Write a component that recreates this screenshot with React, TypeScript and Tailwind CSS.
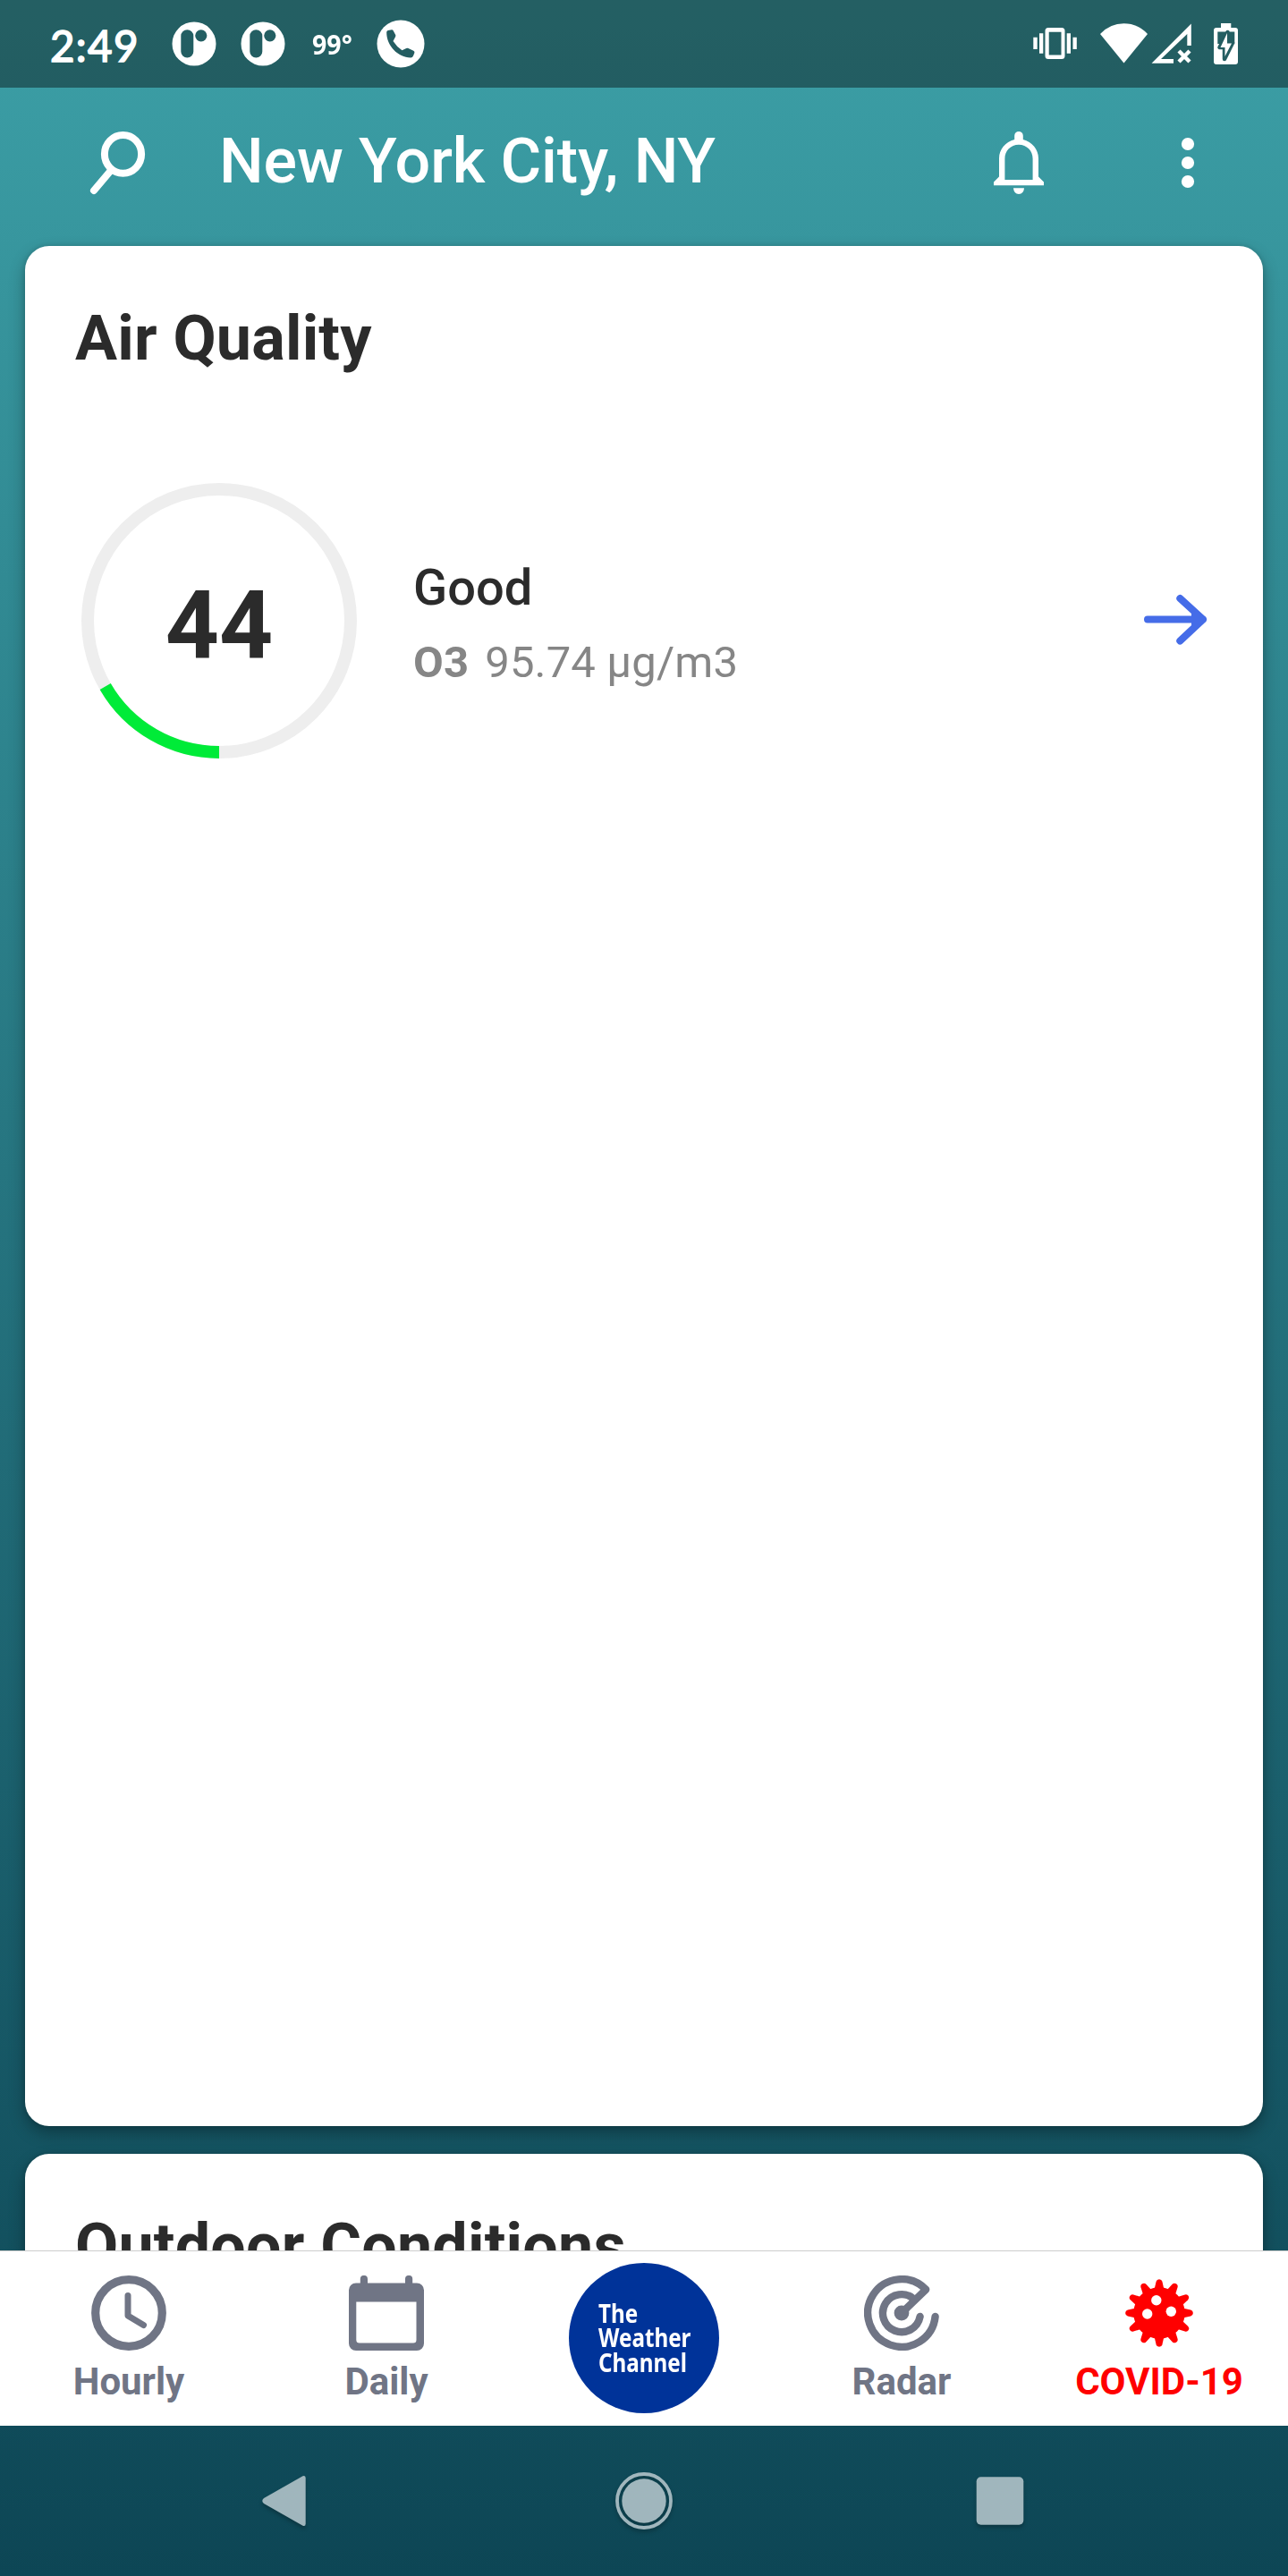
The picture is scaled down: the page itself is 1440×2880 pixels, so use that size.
import type { ReactNode } from "react";

function BadgeIcon() {
  return (
    <svg className="h-[50px] w-[50px]" viewBox="0 0 50 50">
      <path
        fill="#fff"
        fillRule="evenodd"
        d="M25 .5a24.5 24.5 0 1 1 0 49a24.5 24.5 0 1 1 0-49ZM17.3 9.2a7 7 0 0 0-7 7V33.500a7 7 0 0 0 14 0V16.200a7 7 0 0 0-7-7ZM32.800 9.200a6.600 6.600 0 1 0 0 13.200a6.600 6.600 0 1 0 0-13.200Z"
      />
    </svg>
  );
}

function PhoneBadge() {
  return (
    <svg className="ml-[27px] h-[54px] w-[54px]" viewBox="421.500 22.500 54 54">
      <circle cx="448.500" cy="49.500" r="26.500" fill="#fff" />
      <path
        fill="#245d61"
        d="M434.300 34.600L438.500 33.700Q439.600 33.600 440 34.600L442.700 39.500Q443.200 40.600 442.500 41.800L440 46.500Q443.800 52.500 450 56.700L454.800 54.500Q456 53.900 457 54.400L462.800 57.300Q464.300 58.100 463.900 59.500L462.500 63Q461.700 65.200 459.500 65.100C445.500 65 432.500 51.500 432.700 36.600Q432.800 35 434.300 34.600Z"
      />
    </svg>
  );
}

function StatusBar() {
  return (
    <header className="flex h-[98px] shrink-0 items-center justify-between bg-black/40 text-white">
      <div className="flex items-center">
        <span className="ml-[56px] w-[136px] pt-[3px] font-['Lato',sans-serif] text-[47.5px] leading-none font-normal tracking-[1.3px] [-webkit-text-stroke:1.600px_white]">2:49</span>
        <BadgeIcon />
        <span className="w-[27px]" />
        <BadgeIcon />
        <span className="ml-[30px] w-[45px] pt-[1px] font-['Noto_Sans',sans-serif] text-[31px] leading-none font-bold">
          <span className="inline-block origin-left scale-x-[0.920]">99°</span>
        </span>
        <PhoneBadge />
      </div>
      <svg className="mr-[50px] h-[60px] w-[240px]" viewBox="1150 19 240 60">
        <g fill="#fff">
          <path fillRule="evenodd" d="M1172 31H1187Q1190.500 31 1190.500 34.500V62.500Q1190.500 66 1187 66H1172Q1168.500 66 1168.500 62.500V34.500Q1168.500 31 1172 31ZM1172.700 35.700V61.500H1186.500V35.700Z" />
          <path d="M1155.300 41.700h4.400v13.300h-4.400zM1162 37.300h4.300v22.400h-4.300zM1192.700 37.300h4.300v22.400h-4.300zM1199.500 41.700h4.300v13.300h-4.300z" />
          <path d="M1230 38Q1241 26.300 1256.500 26.300T1283 38L1256.500 70.500Z" />
          <path fillRule="evenodd" d="M1331.800 26.500V51H1327.300V38L1298 66H1312V70.700H1287.500Z" />
          <path fillRule="evenodd" d="M1365 26H1376.300V31H1381Q1384 31 1384 34V69Q1384 72 1381 72H1360Q1357 72 1357 69V34Q1357 31 1360 31H1365ZM1361.300 35.500V49H1380.300V35.500Z" />
        </g>
        <path d="M1318 57L1330 69M1330 57L1318 69" stroke="#fff" strokeWidth="4.400" />
        <path d="M1372.500 36L1363.500 53H1369V66L1378 48H1372.500Z" fill="#fff" stroke="#245d61" strokeWidth="4.500" strokeLinejoin="round" />
        <path d="M1372 37L1364.500 53H1369.500V63L1377 48.500H1372Z" fill="#fff" />
      </svg>
    </header>
  );
}

function AppBar() {
  return (
    <div className="flex h-[177px] shrink-0 items-start pt-[38px] text-white">
      <svg className="mt-[6px] ml-[94px] h-[80px] w-[80px]" viewBox="94 142 80 80" fill="none" stroke="#fff">
        <ellipse cx="137.500" cy="172.300" rx="20.600" ry="21.400" strokeWidth="8" />
        <path d="M105 213L124 190.500" strokeWidth="8" strokeLinecap="round" />
      </svg>
      <h1 className="ml-[71px] flex-1 font-['Roboto',sans-serif] text-[70px] leading-[88px] font-medium tracking-[-0.1px]">New York City, NY</h1>
      <svg className="mt-[6px] h-[80px] w-[64px]" viewBox="1107 142 64 80">
        <path
          fill="#fff"
          fillRule="evenodd"
          d="M1134.200 156V151.700a4.800 4.800 0 0 1 9.600 0V156C1154 158.700 1161 167 1161 177V197.500L1167 203.500V207.300H1111V203.500L1117 197.500V177C1117 167 1124 158.700 1134.200 156ZM1139 161.700C1130 161.700 1123.400 168.500 1123.400 177.500V201H1154.600V177.500C1154.600 168.500 1148 161.700 1139 161.700Z"
        />
        <path fill="#fff" d="M1133 210.300H1145Q1144.500 217 1139 217T1133 210.300Z" />
      </svg>
      <svg className="mt-[6px] mr-[88px] ml-[133px] h-[80px] w-[48px]" viewBox="1304 142 48 80" fill="#fff">
        <circle cx="1328" cy="161" r="7.100" />
        <circle cx="1328" cy="182" r="7.100" />
        <circle cx="1328" cy="203" r="7.100" />
      </svg>
    </div>
  );
}

function Card({ title, className, children }: { title: string; className: string; children?: ReactNode }) {
  return (
    <section className={`mx-[28px] shrink-0 rounded-[27px] bg-white px-[56px] pt-[61px] shadow-[0_8px_18px_rgba(0,0,0,0.3),0_0_5px_rgba(0,0,0,0.15)] ${className}`}>
      <h2 className="text-[70px] leading-[84px] font-bold tracking-[0.200px] text-[#2b2b2b]">{title}</h2>
      {children}
    </section>
  );
}

function AirQualityRow() {
  return (
    <div className="mt-[116px] flex items-center">
      <div className="ml-[3px] grid h-[316px] w-[316px] place-items-center">
        <svg className="col-start-1 row-start-1 h-[316px] w-[316px]" viewBox="-158 -158 316 316" fill="none" strokeWidth="14">
          <circle r="147" stroke="#eeeeee" />
          <path d="M0 147A147 147 0 0 1 -127.300 73.500" stroke="#00eb38" />
        </svg>
        <span className="col-start-1 row-start-1 mt-[11px] text-[105px] leading-none font-bold text-[#2b2b2b]">44</span>
      </div>
      <div className="ml-[59px] flex-1 pt-[6px]">
        <p className="text-[56px] leading-[66px] font-medium text-[#2b2b2b]">Good</p>
        <p className="mt-[22px] text-[49px] leading-[58px] tracking-[0.150px] text-[#868686]">
          <b className="mr-[18px] font-bold">O3</b>95.74 µg/m3
        </p>
      </div>
      <svg className="mr-[4px] h-[60px] w-[76px]" viewBox="1276 664 76 60" fill="none" stroke="#456ce8" strokeWidth="8" strokeLinecap="round" strokeLinejoin="round">
        <path d="M1283 692.500H1345M1319.300 669L1345 692.500L1319.300 716.500" />
        <path d="M1336 687L1344 692.500L1336 698Z" fill="#456ce8" />
      </svg>
    </div>
  );
}

function ClockIcon() {
  return (
    <svg className="h-[84px] w-[84px]" viewBox="0 0 84 84" fill="none" stroke="#707585">
      <circle cx="42" cy="42" r="37.300" strokeWidth="9.200" />
      <path d="M41 22.500V45L58.500 55.500" strokeWidth="7" strokeLinecap="round" strokeLinejoin="round" />
    </svg>
  );
}

function CalendarIcon() {
  return (
    <svg className="h-[84px] w-[84px]" viewBox="0 0 84 84" fill="#707585">
      <path fillRule="evenodd" d="M12.800 8.500V4a4.100 4.100 0 0 1 8.200 0V8.500H63V4a4.100 4.100 0 0 1 8.200 0V8.500H76a8 8 0 0 1 8 8V76a8 8 0 0 1-8 8H8a8 8 0 0 1-8-8V16.500a8 8 0 0 1 8-8ZM8.300 29.500V72a3.500 3.500 0 0 0 3.500 3.500H72a3.500 3.500 0 0 0 3.500-3.500V29.500Z" />
    </svg>
  );
}

function RadarIcon() {
  return (
    <svg className="h-[84px] w-[84px]" viewBox="0 0 84 84" fill="none" stroke="#707585" strokeWidth="8.400" strokeLinecap="round" strokeLinejoin="round">
      <path d="M79.600 46A37.800 37.800 0 1 1 69.200 15.700L42 42" />
      <path d="M62.600 46A21 21 0 1 1 56 26.500" />
      <circle cx="42" cy="42" r="8.400" fill="#707585" stroke="none" />
    </svg>
  );
}

const SPIKES = [0, 30, 60, 90, 120, 150, 180, 210, 240, 270, 300, 330];

function VirusIcon() {
  return (
    <svg className="h-[84px] w-[84px]" viewBox="-42 -42 84 84" fill="#f00">
      <circle r="28.700" />
      {SPIKES.map((angle) => (
        <path key={angle} d="M-5.500 -26L-3.400 -35.200A3.500 3.500 0 0 1 3.400 -35.200L5.500 -26Z" transform={`rotate(${angle})`} />
      ))}
      <g fill="#fff">
        <circle cx="-3.200" cy="-14.300" r="5.700" />
        <circle cx="-13.300" cy="1" r="5.700" />
        <circle cx="13.300" cy="-1.800" r="5.700" />
      </g>
    </svg>
  );
}

function Tab({ label, children, active = false }: { label: string; children: ReactNode; active?: boolean }) {
  return (
    <div className={`flex w-[288px] flex-col items-center pt-[27px] ${active ? "text-[#f00]" : "text-[#707585]"}`}>
      {children}
      <span className="mt-[10px] text-[42px] leading-[50px] font-bold">{label}</span>
    </div>
  );
}

function TabBar() {
  return (
    <nav className="flex h-[196px] shrink-0 border-t border-[#cccccc] bg-white">
      <Tab label="Hourly"><ClockIcon /></Tab>
      <Tab label="Daily"><CalendarIcon /></Tab>
      <div className="flex w-[288px] justify-center pt-[13px]">
        <div className="h-[168px] w-[168px] rounded-full bg-[#003399] pt-[43px] pl-[33px] text-left font-['Noto_Sans',sans-serif] text-[28px] leading-[27.400px] font-bold text-white">
          <div className="w-[130px] origin-left scale-x-[0.865]">
            <p>The</p>
            <p>Weather</p>
            <p>Channel</p>
          </div>
        </div>
      </div>
      <Tab label="Radar"><RadarIcon /></Tab>
      <Tab label="COVID-19" active><VirusIcon /></Tab>
    </nav>
  );
}

function SystemNav() {
  return (
    <footer className="flex h-[168px] shrink-0 items-center pl-[282px]">
      <svg className="h-[72px] w-[72px] drop-shadow-[0_3px_2px_rgba(0,0,0,0.25)]" viewBox="282 2760 72 72" fill="#a0b6bd">
        <path d="M338.500 2768.300Q341.700 2767 341.700 2770.500V2821.500Q341.700 2825 338.500 2823.700L295 2799Q291.500 2796 295 2793Z" />
      </svg>
      <svg className="ml-[330px] h-[72px] w-[72px] drop-shadow-[0_3px_2px_rgba(0,0,0,0.25)]" viewBox="-36 -36 72 72">
        <circle r="24.700" fill="#a0b6bd" />
        <circle r="30" fill="none" stroke="#a0b6bd" strokeWidth="3.800" />
      </svg>
      <svg className="ml-[326px] h-[72px] w-[72px] drop-shadow-[0_3px_2px_rgba(0,0,0,0.25)]" viewBox="-36 -36 72 72">
        <rect x="-26.300" y="-26.800" width="52.600" height="53.600" rx="5" fill="#a0b6bd" />
      </svg>
    </footer>
  );
}

export default function App() {
  return (
    <div className="flex h-[2880px] w-[1440px] flex-col overflow-hidden bg-linear-to-b from-[#3c9fa6] to-[#0d4655] font-['Roboto',sans-serif]">
      <StatusBar />
      <AppBar />
      <main className="-mt-[30px] flex h-[2271px] shrink-0 flex-col overflow-hidden pt-[30px]">
        <Card title="Air Quality" className="h-[2102px]">
          <AirQualityRow />
        </Card>
        <Card title="Outdoor Conditions" className="mt-[31px] h-[300px]" />
      </main>
      <TabBar />
      <SystemNav />
    </div>
  );
}
